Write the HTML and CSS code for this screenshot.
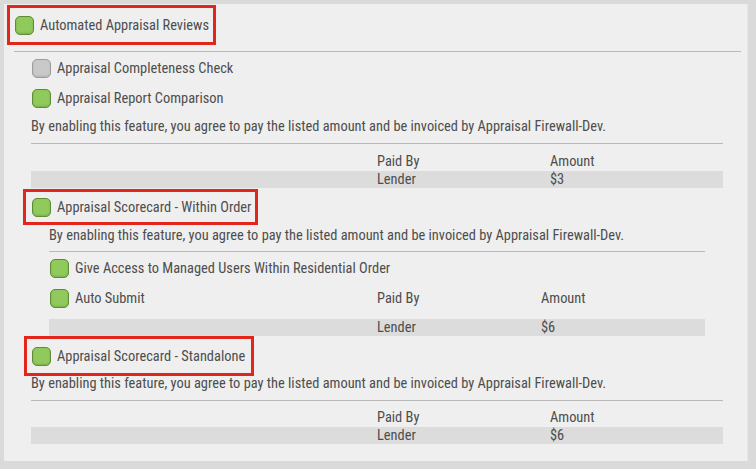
FILE: index.html
```html
<!DOCTYPE html>
<html>
<head>
<meta charset="utf-8">
<link rel="stylesheet" href="styles.css">
</head>
<body>
<div class="panel">
  <div class="head head-1">
    <span class="cb on"></span><span class="label">Automated Appraisal Reviews</span>
  </div>
  <div class="rule rule-top"></div>
  <div class="sub">
    <div class="row"><span class="cb off"></span><span class="label">Appraisal Completeness Check</span></div>
    <div class="row"><span class="cb on"></span><span class="label">Appraisal Report Comparison</span></div>
    <div class="note note-1">By enabling this feature, you agree to pay the listed amount and be invoiced by Appraisal Firewall-Dev.</div>
    <div class="rule rule-sub"></div>
    <div class="grid thead"><span></span><span>Paid By</span><span>Amount</span></div>
    <div class="grid tbody"><span></span><span>Lender</span><span>$3</span></div>
  </div>
  <div class="head head-2">
    <span class="cb on"></span><span class="label">Appraisal Scorecard - Within Order</span>
  </div>
  <div class="nested">
    <div class="note note-2">By enabling this feature, you agree to pay the listed amount and be invoiced by Appraisal Firewall-Dev.</div>
    <div class="rule rule-nested"></div>
    <div class="row row-n"><span class="cb on"></span><span class="label">Give Access to Managed Users Within Residential Order</span></div>
    <div class="grid row-n auto">
      <span class="cell-first"><span class="cb on"></span><span class="label">Auto Submit</span></span><span>Paid By</span><span>Amount</span>
    </div>
    <div class="grid tbody tbody-n"><span></span><span>Lender</span><span>$6</span></div>
  </div>
  <div class="head head-3">
    <span class="cb on"></span><span class="label">Appraisal Scorecard - Standalone</span>
  </div>
  <div class="sub">
    <div class="note note-3">By enabling this feature, you agree to pay the listed amount and be invoiced by Appraisal Firewall-Dev.</div>
    <div class="rule rule-sub3"></div>
    <div class="grid thead thead-3"><span></span><span>Paid By</span><span>Amount</span></div>
    <div class="grid tbody"><span></span><span>Lender</span><span>$6</span></div>
  </div>
</div>
</body>
</html>
```
FILE: styles.css
```css
* { box-sizing: border-box; }
html, body { margin: 0; padding: 0; }
body {
  background: #dadada;
  width: 756px;
  height: 469px;
  overflow: hidden;
  padding: 4px 8px 8px 4px;
  font-family: Roboto, "Liberation Sans", sans-serif;
  font-stretch: 80%;
  font-size: 14.4px;
  color: #4d4d4d;
}
.panel {
  background: #efefef;
  height: 457px;
  padding-top: 1px;
  border-right: 1px solid #e6e6e6;
}
.cb {
  display: inline-block;
  width: 19px;
  height: 19px;
  border-radius: 5px;
  flex: none;
}
.cb.on {
  background: #90c95c;
  border: 1.5px solid #5f8c37;
  box-shadow: inset 0 -1px 2px rgba(60, 100, 20, 0.25);
}
.cb.off {
  background: #c9c9c9;
  border: 1.5px solid #9c9c9c;
  box-shadow: inset 0 -1px 2px rgba(0, 0, 0, 0.12);
}
.label { margin-left: 6px; white-space: nowrap; }
.head {
  display: flex;
  align-items: center;
  border: 3px solid #e3261c;
  width: max-content;
}
.head-1 { margin-left: 3px; height: 40px; padding: 0 4px 0 5px; }
.head-2 { margin-left: 19px; margin-top: 1px; height: 36px; padding: 0 3px 0 6px; }
.head-3 { margin-left: 20px; height: 40px; padding: 0 6px 0 5px; }
.rule { height: 1px; background: #b9b9b9; }
.rule-top { margin: 6px 6px 0 10px; }
.sub { margin: 0 24px 0 27px; }
.row { display: flex; align-items: center; height: 30px; padding-left: 1px; }
.row:first-child { margin-top: 1px; }
.note { white-space: nowrap; }
.note-1 { line-height: 28px; }
.rule-sub { margin-top: 2px; }
.grid {
  display: grid;
  grid-template-columns: 50% 25% 25%;
}
.thead { padding-top: 9px; line-height: 18px; margin-bottom: 0; }
.tbody { background: #dcdcdc; line-height: 17px; height: 17px; }
.nested { margin: 0 42px 0 45px; }
.note-2 { line-height: 22px; }
.rule-nested { margin-top: 4px; }
.row-n { height: 30px; align-items: center; }
.rule-nested + .row-n { margin-top: 1px; }
.cell-first { display: flex; align-items: center; padding-left: 1px; }
.tbody-n { margin-top: 6px; }
.note-3 { line-height: 16px; }
.rule-sub3 { margin-top: 8px; }
.thead-3 { padding-top: 8px; margin-bottom: 0; }
```
